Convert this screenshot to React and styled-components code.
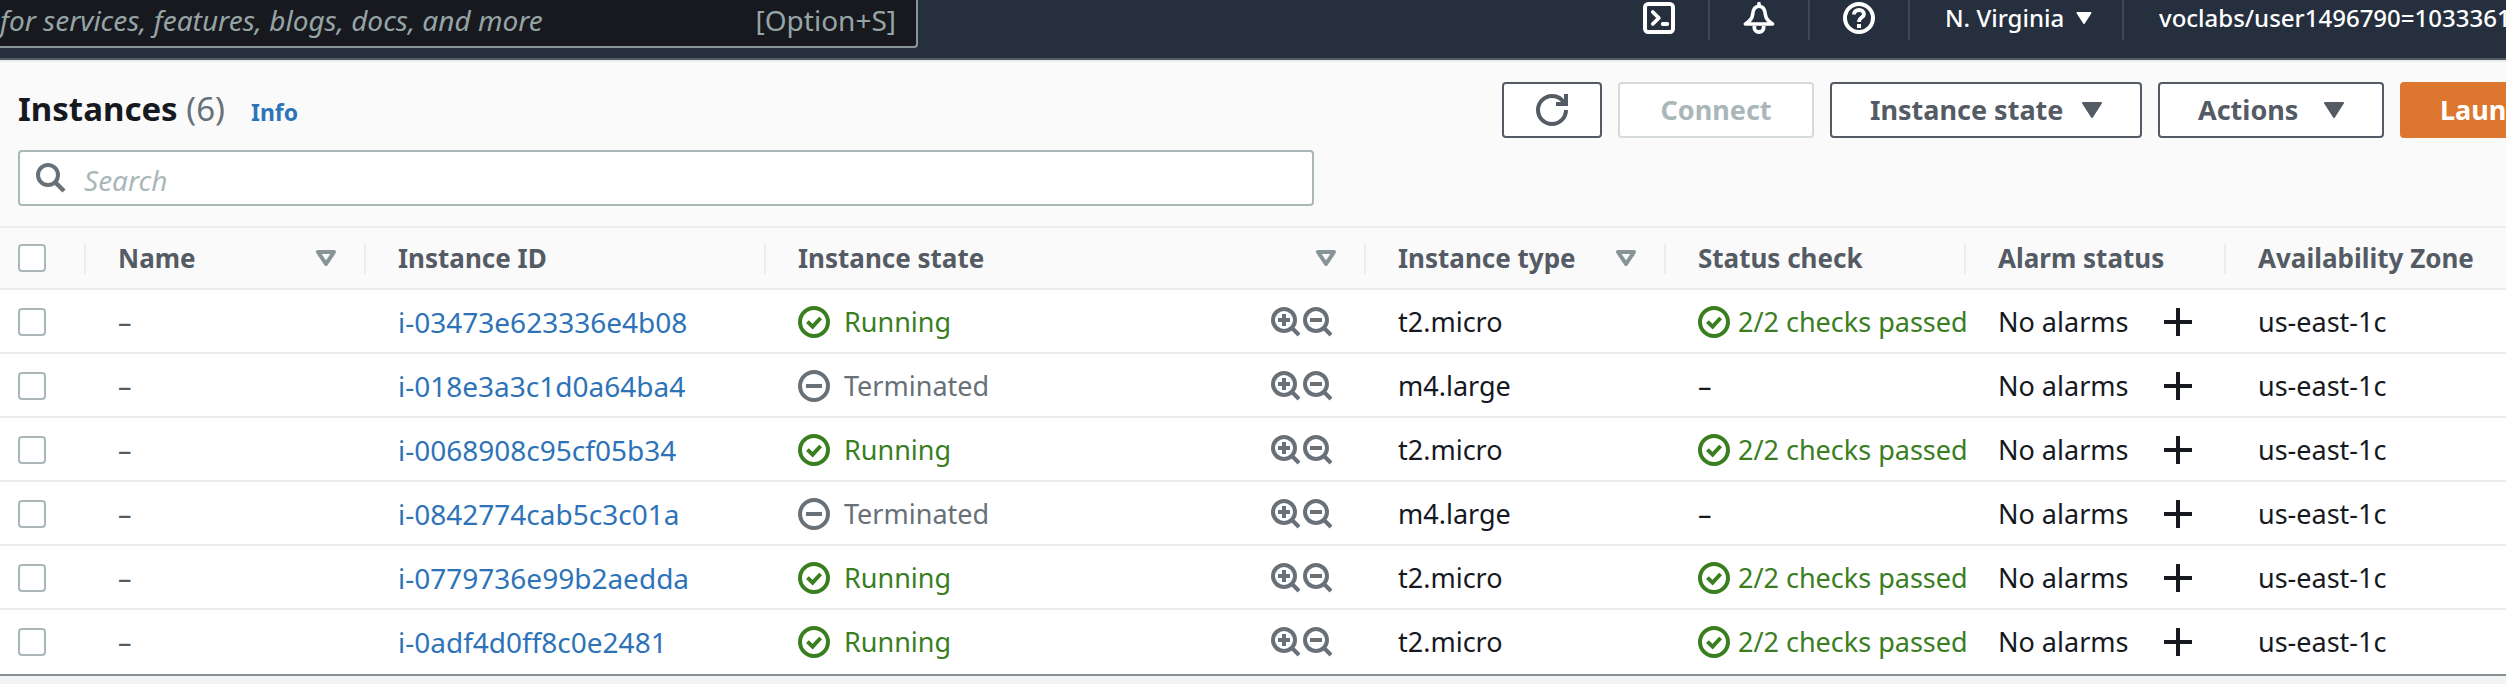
import React from "react";
import styled, { createGlobalStyle, css } from "styled-components";

const GlobalStyle = createGlobalStyle`
  * { box-sizing: border-box; }
  body {
    margin: 0;
    background: #f2f3f3;
    color: #16191f;
    font-family: "Noto Sans", "Open Sans", sans-serif;
    font-size: 27px;
    line-height: 36px;
    overflow-x: hidden;
  }
  button, input { font: inherit; color: inherit; margin: 0; }
  button { cursor: pointer; }
`;

/* ---------- icons ---------- */

const Svg = styled.svg`
  display: block;
  flex: none;
  width: ${(p) => p.$w || 32}px;
  height: ${(p) => p.$h || p.$w || 32}px;
  fill: none;
  stroke: currentColor;
  stroke-width: 2;
`;

const TerminalIcon = () => (
  <Svg viewBox="0 0 16 16" aria-hidden="true">
    <rect x="1" y="1" width="14" height="14" rx="1.6" />
    <path d="M4.9 5 7.9 8 4.9 11" strokeWidth="1.9" strokeLinecap="round" strokeLinejoin="round" />
    <path d="M9.9 11h2.2" strokeLinecap="round" />
  </Svg>
);

const BellIcon = () => (
  <Svg viewBox="0 0 16 16" aria-hidden="true">
    <path d="M1.200 11h13.600c-2.200-1.400-3.400-2.600-3.600-4.600C11 3.600 9.800 2.100 8 2.100S5 3.600 4.800 6.400C4.600 8.400 3.400 9.600 1.200 11z" strokeWidth="1.800" strokeLinejoin="round" />
    <path d="M8 0.800v1" strokeWidth="1.800" strokeLinecap="round" />
    <path d="M5.700 12v1c0 1.200 1 2 2.300 2s2.300-.800 2.300-2v-1" strokeWidth="1.900" />
  </Svg>
);

const HelpIcon = () => (
  <Svg viewBox="0 0 16 16" aria-hidden="true">
    <circle cx="8" cy="8" r="7" />
    <path d="M5.500 6.200C5.500 4.900 6.500 4 8 4s2.500.900 2.500 2.100C10.500 7.700 8 7.600 8 10" strokeWidth="1.900" />
    <path d="M8 11v2" />
  </Svg>
);

const RefreshIcon = () => (
  <Svg viewBox="0 0 16 16" aria-hidden="true">
    <path d="M15 8c0 3.870-3.130 7-7 7s-7-3.130-7-7 3.130-7 7-7c2.790 0 5.200 1.640 6.320 4" />
    <path d="M10 5h5V0" />
  </Svg>
);

const SearchIcon = () => (
  <Svg viewBox="0 0 30 30" $w={30} aria-hidden="true">
    <circle cx="12" cy="12" r="10" strokeWidth="4" />
    <path d="M19 19l9 9" strokeWidth="4.500" />
  </Svg>
);

const CheckCircleIcon = () => (
  <Svg viewBox="0 0 16 16" aria-hidden="true">
    <circle cx="8" cy="8" r="7" />
    <path d="M4.700 7.800 7.300 10.300 11.300 6" />
  </Svg>
);

const MinusCircleIcon = () => (
  <Svg viewBox="0 0 16 16" aria-hidden="true">
    <circle cx="8" cy="8" r="7" />
    <path d="M4 8h8" />
  </Svg>
);

const ZoomIcon = ({ plus }) => (
  <Svg viewBox="0 0 30 30" $w={30} aria-hidden="true">
    <circle cx="13" cy="13" r="11" strokeWidth="4" />
    <path d={plus ? "M7 13h12M13 7v12" : "M7 13h12"} strokeWidth="4" />
    <path d="M21 21l7 7" strokeWidth="4" />
  </Svg>
);

const PlusIcon = () => (
  <Svg viewBox="0 0 28 28" $w={28} aria-hidden="true">
    <path d="M0 14h28M14 0v28" strokeWidth="4" />
  </Svg>
);

const CaretIcon = ({ width, height }) => (
  <Svg viewBox="0 0 20 16" $w={width} $h={height} aria-hidden="true">
    <path d="M1 1h18L10 15z" fill="currentColor" strokeLinejoin="round" />
  </Svg>
);

const FilterIcon = () => (
  <Svg viewBox="0 0 20 16" $w={20} $h={16} aria-hidden="true">
    <path d="M2 2h16L10 14z" strokeWidth="4" strokeLinejoin="round" />
  </Svg>
);

/* ---------- top bar ---------- */

const TopBar = styled.header`
  display: flex;
  align-items: flex-start;
  justify-content: space-between;
  height: 60px;
  background: #252f3e;
  border-bottom: 2px solid #545b64;
  overflow: hidden;
`;

const GlobalSearch = styled.label`
  display: flex;
  align-items: center;
  flex: 0 1 918px;
  height: 48px;
  padding: 0 20px 6px 0;
  background: #17191e;
  border: solid #879596;
  border-width: 0 2px 2px 0;
  border-radius: 0 0 4px 0;
  color: #95a5a6;
  font-size: 28px;
`;

const GlobalSearchInput = styled.input`
  flex: 1;
  min-width: 0;
  padding: 0;
  border: 0;
  outline: 0;
  background: none;
  &::placeholder { color: #95a5a6; opacity: 1; font-style: italic; }
`;

const NavItems = styled.nav`
  display: flex;
  flex: none;
`;

const NavButton = styled.button`
  display: flex;
  align-items: center;
  justify-content: ${(p) => (p.$start ? "flex-start" : "center")};
  gap: 12px;
  width: ${(p) => p.$width || 100}px;
  height: 40px;
  padding: ${(p) => (p.$start ? "0 0 4px 35px" : "0 0 4px")};
  border: solid #414750;
  border-width: 0 2px 0 0;
  background: none;
  color: #fff;
  font-size: 24px;
  font-weight: 500;
  line-height: 32px;
  white-space: nowrap;
  overflow: hidden;
  &:last-child { border-right: 0; }
`;

/* ---------- instances panel ---------- */

const Panel = styled.main`
  background: #fff;
  border-bottom: 2px solid #879196;
  box-shadow: 0 1px 1px #b5bcbe;
`;

const PanelHeader = styled.section`
  display: flex;
  flex-direction: column;
  gap: 12px;
  padding: 20px 0 20px 18px;
  background: #fafafa;
  border: solid #eaeded;
  border-width: 2px 0;
`;

const TitleRow = styled.div`
  display: flex;
  align-items: center;
  justify-content: space-between;
`;

const TitleGroup = styled.div`
  display: flex;
  align-items: baseline;
  gap: 26px;
  padding-bottom: 2px;
`;

const Title = styled.h1`
  margin: 0;
  font-size: 33px;
  line-height: 44px;
  font-weight: 700;
`;

const Counter = styled.span`
  color: #687078;
  font-weight: 400;
`;

const InfoLink = styled.a`
  color: #2e73b8;
  font-size: 23px;
  font-weight: 700;
  text-decoration: none;
`;

const Actions = styled.div`
  display: flex;
  flex: 0 0 1004px;
  gap: 16px;
  overflow: hidden;
`;

const ActionButton = styled.button`
  display: flex;
  flex: none;
  align-items: center;
  justify-content: space-between;
  width: ${(p) => p.$width}px;
  height: 56px;
  padding: 0 38px;
  border: 2px solid #545b64;
  border-radius: 4px;
  background: #fff;
  color: #545b64;
  font-weight: 700;
  white-space: nowrap;
  &:disabled { border-color: #d5dbdb; color: #aab7b8; }
  ${(p) => p.$center && css`justify-content: center;`}
  ${(p) => p.$primary && css`
    border-color: #dd7730;
    background: #dd7730;
    color: #fff;
  `}
`;

const SearchField = styled.label`
  display: flex;
  align-items: center;
  gap: 18px;
  max-width: 1296px;
  height: 56px;
  padding: 0 16px;
  border: 2px solid #aab7b8;
  border-radius: 4px;
  background: #fff;
  color: #687078;
`;

const SearchInput = styled.input`
  flex: 1;
  padding: 4px 0 0;
  border: 0;
  outline: 0;
  background: none;
  font-size: 28px;
  &::placeholder { color: #aab7b8; opacity: 1; font-style: italic; }
`;

/* ---------- table ---------- */

const Table = styled.table`
  width: 100%;
  table-layout: fixed;
  border-collapse: separate;
  border-spacing: 0;
`;

const Col = styled.col`
  width: ${(p) => (p.$width ? `${p.$width}px` : "auto")};
`;

const Th = styled.th`
  padding: 16px 0 14px;
  background: #fafafa;
  border-bottom: 2px solid #eaeded;
  color: #545b64;
  font-size: 26px;
  font-weight: 700;
  text-align: left;
  white-space: nowrap;
`;

const HeadCell = styled.div`
  display: flex;
  align-items: center;
  justify-content: space-between;
  height: 30px;
  padding: 0 28px 2px ${(p) => (p.$select ? 18 : 32)}px;
  border-right: ${(p) => (p.$last ? "0" : "2px solid #eaeded")};
`;

const FilterButton = styled.button`
  padding: 0;
  border: 0;
  background: none;
  color: #879596;
`;

const Td = styled.td`
  height: 64px;
  padding: 2px 0 0 ${(p) => (p.$select ? 18 : 32)}px;
  border-bottom: 2px solid #eaeded;
  white-space: nowrap;
  overflow: hidden;
  tr:last-child > & { border-bottom-color: #fff; }
`;

const Checkbox = styled.input`
  display: block;
  appearance: none;
  width: 28px;
  height: 28px;
  border: 2px solid #aab7b8;
  border-radius: 4px;
  background: #fff;
`;

const IdLink = styled.a`
  color: #2e73b8;
  font-size: 28px;
  text-decoration: none;
`;

const Muted = styled.span`
  color: #545b64;
`;

const CellRow = styled.div`
  display: flex;
  align-items: center;
  justify-content: space-between;
  padding-right: ${(p) => p.$right}px;
`;

const Status = styled.span`
  display: flex;
  align-items: center;
  gap: ${(p) => (p.$tight ? 8 : 14)}px;
  color: ${(p) => (p.$ok ? "#3a7e1f" : "#687078")};
`;

const IconGroup = styled.span`
  display: flex;
  gap: 2px;
`;

const IconButton = styled.button`
  padding: 0;
  border: 0;
  background: none;
  color: ${(p) => (p.$dark ? "#16191f" : "#687078")};
`;

const instances = [
  { id: "i-03473e623336e4b08", running: true, type: "t2.micro" },
  { id: "i-018e3a3c1d0a64ba4", running: false, type: "m4.large" },
  { id: "i-0068908c95cf05b34", running: true, type: "t2.micro" },
  { id: "i-0842774cab5c3c01a", running: false, type: "m4.large" },
  { id: "i-0779736e99b2aedda", running: true, type: "t2.micro" },
  { id: "i-0adf4d0ff8c0e2481", running: true, type: "t2.micro" },
];

const columns = [
  { label: "Name", width: 280, filter: true },
  { label: "Instance ID", width: 400 },
  { label: "Instance state", width: 600, filter: true },
  { label: "Instance type", width: 300, filter: true },
  { label: "Status check", width: 300 },
  { label: "Alarm status", width: 260 },
  { label: "Availability Zone" },
];

const InstanceRow = ({ instance }) => (
  <tr>
    <Td $select>
      <Checkbox type="checkbox" aria-label={`Select ${instance.id}`} />
    </Td>
    <Td><Muted>–</Muted></Td>
    <Td><IdLink href={`#${instance.id}`}>{instance.id}</IdLink></Td>
    <Td>
      <CellRow $right={33}>
        <Status $ok={instance.running}>
          {instance.running ? <CheckCircleIcon /> : <MinusCircleIcon />}
          {instance.running ? "Running" : "Terminated"}
        </Status>
        <IconGroup>
          <IconButton aria-label="Include state in filter"><ZoomIcon plus /></IconButton>
          <IconButton aria-label="Exclude state from filter"><ZoomIcon /></IconButton>
        </IconGroup>
      </CellRow>
    </Td>
    <Td>{instance.type}</Td>
    <Td>
      {instance.running ? (
        <Status $ok $tight>
          <CheckCircleIcon />
          2/2 checks passed
        </Status>
      ) : "–"}
    </Td>
    <Td>
      <CellRow $right={34}>
        No alarms
        <IconButton $dark aria-label="Create alarm"><PlusIcon /></IconButton>
      </CellRow>
    </Td>
    <Td>us-east-1c</Td>
  </tr>
);

export default function App() {
  return (
    <>
      <GlobalStyle />
      <TopBar>
        <GlobalSearch>
          <GlobalSearchInput
            aria-label="Search services"
            placeholder="for services, features, blogs, docs, and more"
          />
          [Option+S]
        </GlobalSearch>
        <NavItems>
          <NavButton aria-label="CloudShell"><TerminalIcon /></NavButton>
          <NavButton aria-label="Notifications"><BellIcon /></NavButton>
          <NavButton aria-label="Help"><HelpIcon /></NavButton>
          <NavButton $start $width={214}>
            N. Virginia
            <CaretIcon width={16} height={12} />
          </NavButton>
          <NavButton $start $width={382}>voclabs/user1496790=1033361</NavButton>
        </NavItems>
      </TopBar>
      <Panel>
        <PanelHeader>
          <TitleRow>
            <TitleGroup>
              <Title>Instances <Counter>(6)</Counter></Title>
              <InfoLink href="#info">Info</InfoLink>
            </TitleGroup>
            <Actions>
              <ActionButton $width={100} $center aria-label="Refresh"><RefreshIcon /></ActionButton>
              <ActionButton $width={196} $center disabled>Connect</ActionButton>
              <ActionButton $width={312}>
                Instance state
                <CaretIcon width={20} height={16} />
              </ActionButton>
              <ActionButton $width={226}>
                Actions
                <CaretIcon width={20} height={16} />
              </ActionButton>
              <ActionButton $width={300} $primary>Launch instances</ActionButton>
            </Actions>
          </TitleRow>
          <SearchField>
            <SearchIcon />
            <SearchInput aria-label="Search instances" placeholder="Search" />
          </SearchField>
        </PanelHeader>
        <Table>
          <colgroup>
            <Col $width={86} />
            {columns.map((c) => <Col key={c.label} $width={c.width} />)}
          </colgroup>
          <thead>
            <tr>
              <Th>
                <HeadCell $select>
                  <Checkbox type="checkbox" aria-label="Select all instances" />
                </HeadCell>
              </Th>
              {columns.map((c, i) => (
                <Th key={c.label} scope="col">
                  <HeadCell $last={i === columns.length - 1}>
                    {c.label}
                    {c.filter && (
                      <FilterButton aria-label={`Sort by ${c.label}`}><FilterIcon /></FilterButton>
                    )}
                  </HeadCell>
                </Th>
              ))}
            </tr>
          </thead>
          <tbody>
            {instances.map((instance) => (
              <InstanceRow key={instance.id} instance={instance} />
            ))}
          </tbody>
        </Table>
      </Panel>
    </>
  );
}
